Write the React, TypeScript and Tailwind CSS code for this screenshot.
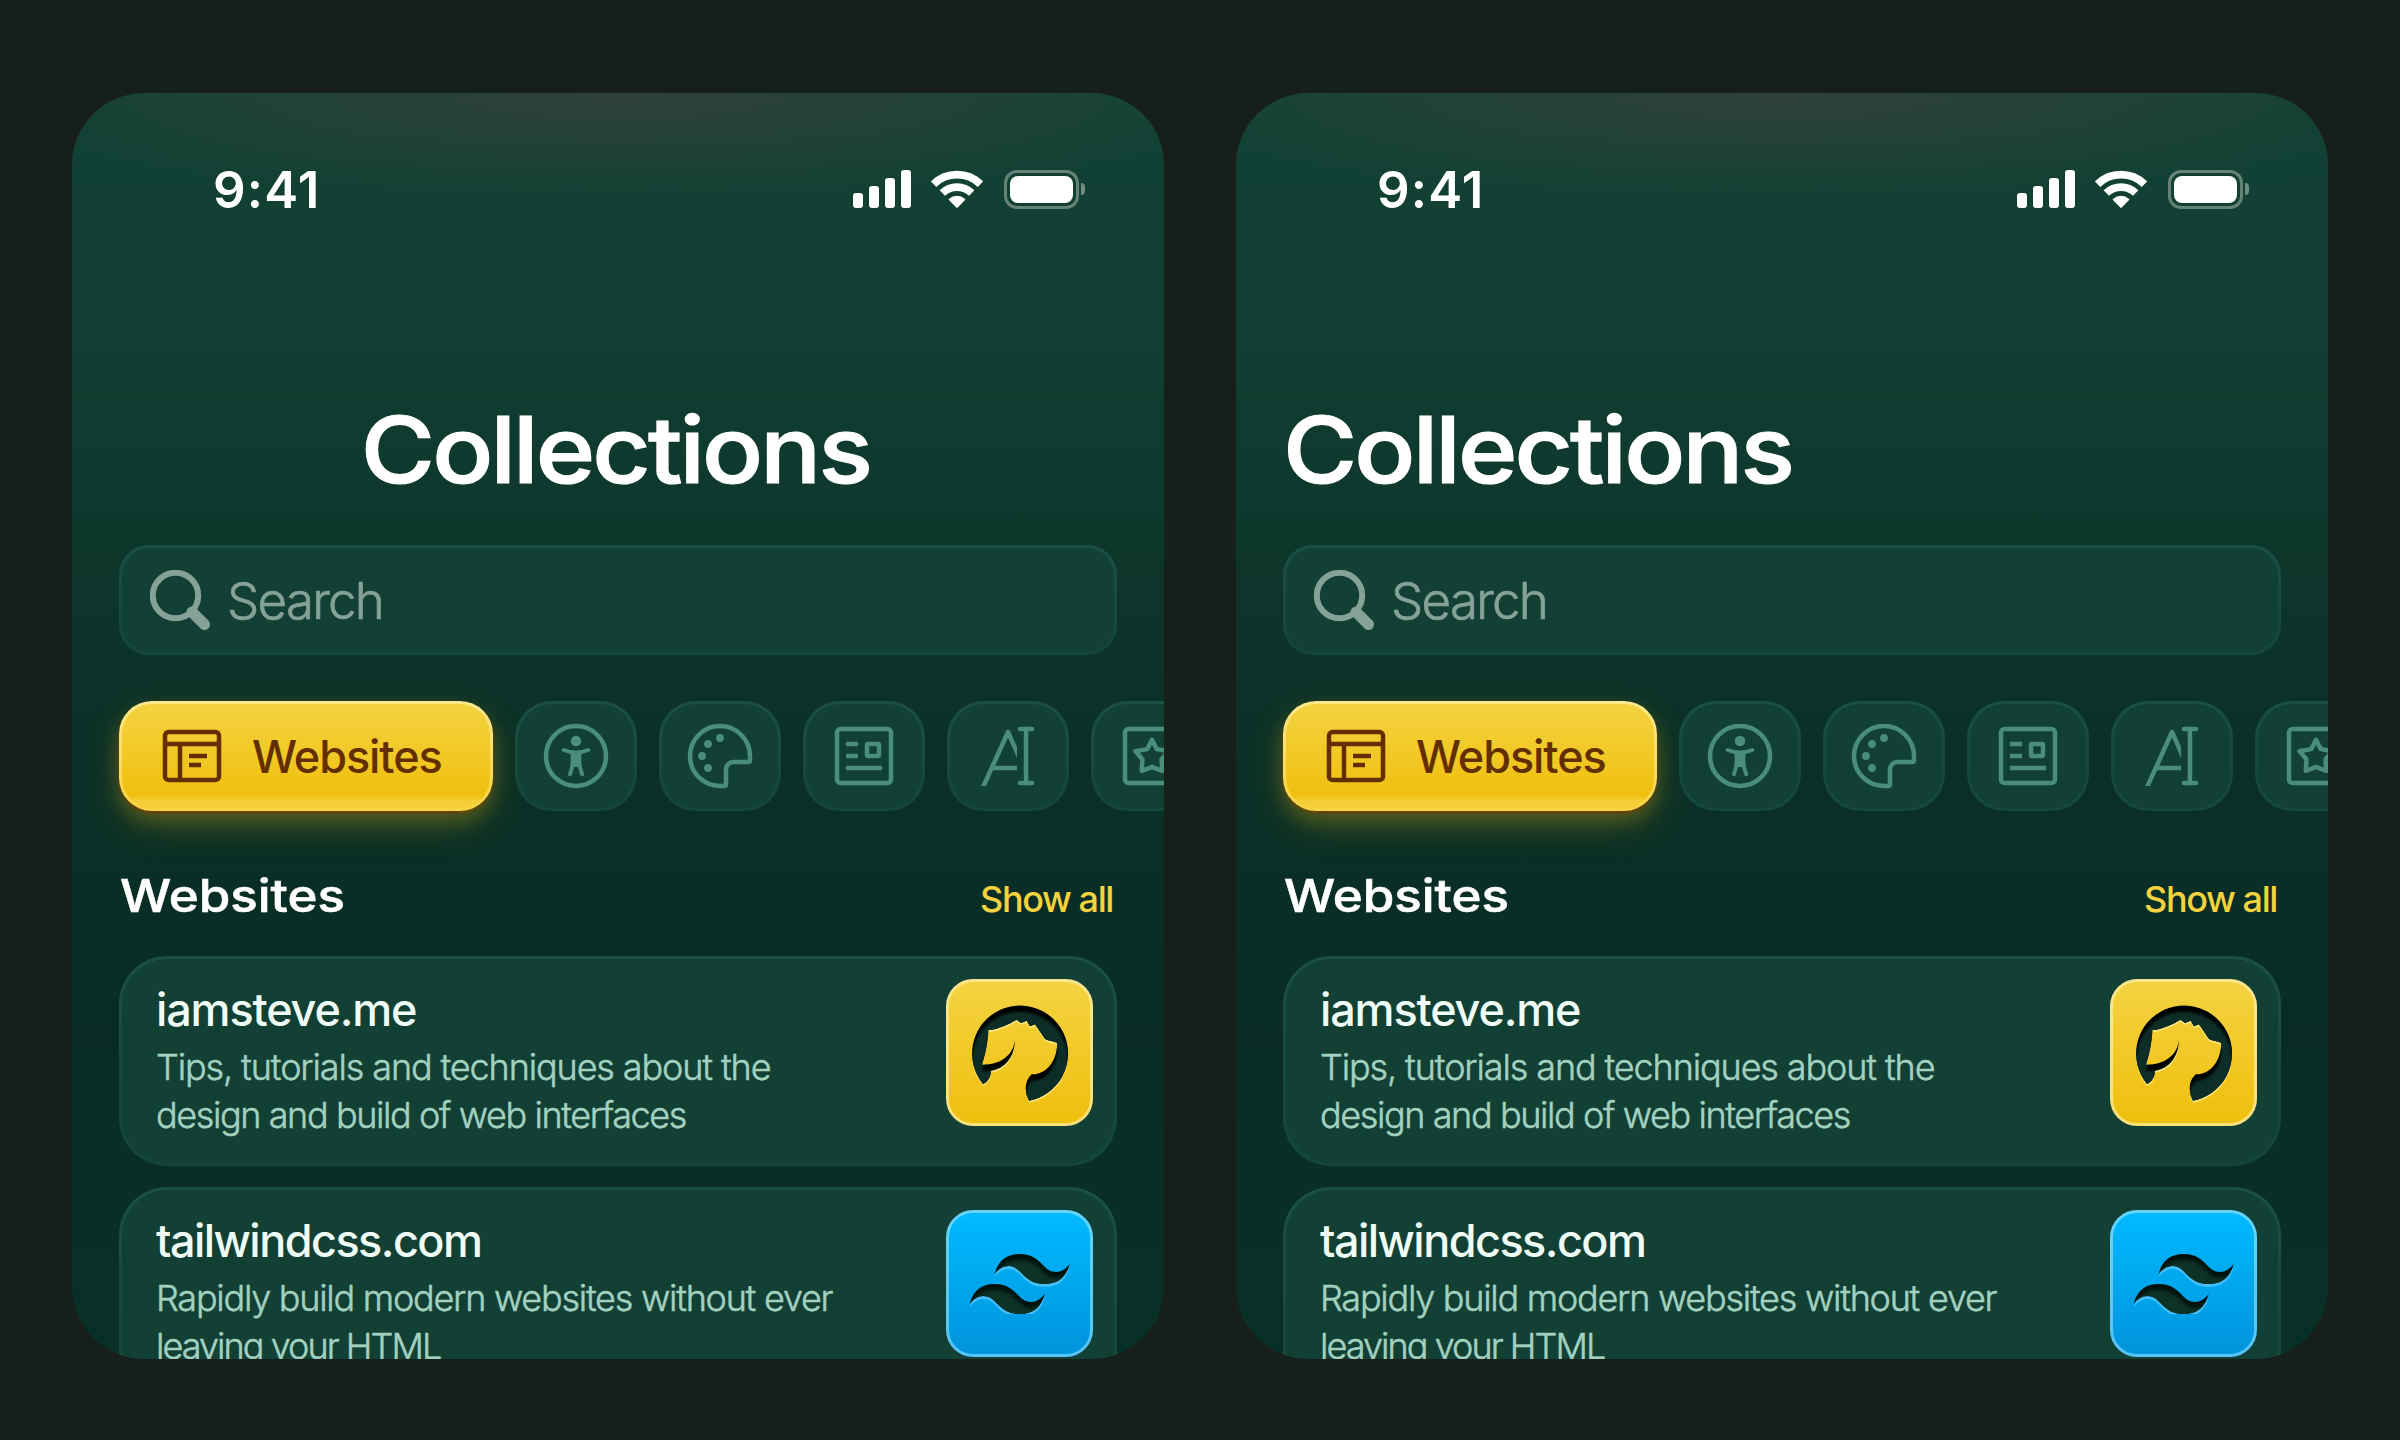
import type { ReactNode } from 'react';

function Signal() {
  return (
    <div className="flex h-[38px] items-end gap-[6px]">
      <div className="h-[15px] w-[10px] rounded-[3px] bg-white" />
      <div className="h-[22px] w-[10px] rounded-[3px] bg-white" />
      <div className="h-[30px] w-[10px] rounded-[3px] bg-white" />
      <div className="h-[38px] w-[10px] rounded-[3px] bg-white" />
    </div>
  );
}

function Wifi() {
  return (
    <svg className="ml-5 h-[39px] w-[52px]" viewBox="0 0 156 117" fill="none" stroke="#fff" strokeWidth="23">
      <path d="M7.8 42.4A101 101 0 0 1 148.2 42.4" />
      <path d="M33.9 69.3A63.5 63.5 0 0 1 122.1 69.3" />
      <path d="M78 113L54 88.5A35 35 0 0 1 102 88.5Z" fill="#fff" strokeWidth="3" strokeLinejoin="round" />
    </svg>
  );
}

function Battery() {
  return (
    <div className="ml-[21px] flex items-center gap-[2px]">
      <div className="h-[39px] w-[75px] rounded-[13px] border-[3px] border-white/35 p-[3px]">
        <div className="h-full w-full rounded-[8px] bg-white" />
      </div>
      <div className="h-[12px] w-[4px] rounded-r-full bg-white/40" />
    </div>
  );
}

function Glyph({ children }: { children: ReactNode }) {
  return (
    <svg
      className="size-[72px] shrink-0"
      viewBox="0 0 24 24"
      fill="none"
      stroke="currentColor"
      strokeWidth="1.5"
      strokeLinejoin="round"
    >
      {children}
    </svg>
  );
}

function LayoutGlyph() {
  return (
    <Glyph>
      <rect x="3" y="4" width="18" height="16" rx="1.2" />
      <path d="M3 8H21M8 8V20M11 12H17M11 15H15" />
    </Glyph>
  );
}

function AccessibilityGlyph() {
  return (
    <Glyph>
      <circle cx="12" cy="12" r="10" />
      <circle cx="12" cy="7" r="1.75" fill="currentColor" stroke="none" />
      <path d="M7.9 10c1.3.55 2.7.85 4.1.85s2.8-.3 4.1-.85" strokeWidth="1.3" strokeLinecap="round" />
      <path d="M10.2 10.6h3.6v4.1l.2 1h-4l.2-1z" fill="currentColor" stroke="none" />
      <path d="M10.9 15L10 18.1M13.1 15L14.05 18.1" strokeWidth="1.3" strokeLinecap="round" />
    </Glyph>
  );
}

function PaletteGlyph() {
  return (
    <Glyph>
      <path d="M12 22A10 10 0 1 1 22 12V13.4Q22 14 21.4 14H16.5A2.5 2.5 0 0 0 14 16.5V21.4Q14 22 13.4 22Z" />
      <g fill="currentColor" stroke="none">
        <circle cx="12" cy="6" r="1.3" />
        <circle cx="8" cy="8" r="1.3" />
        <circle cx="6" cy="12" r="1.3" />
        <circle cx="8" cy="16" r="1.3" />
      </g>
    </Glyph>
  );
}

function NewsGlyph() {
  return (
    <Glyph>
      <rect x="3" y="3" width="18" height="18" rx="1.2" />
      <rect x="13" y="8" width="4" height="4" rx="0.4" />
      <path d="M6 8H10M6 12H10M6 16H18" />
    </Glyph>
  );
}

function TypeGlyph() {
  return (
    <Glyph>
      <clipPath id="letter-clip">
        <rect width="15" height="22" />
      </clipPath>
      <g clipPath="url(#letter-clip)">
        <path d="M3.4 23L12 4L16.2 13.5M7 16H16" />
      </g>
      <path d="M16 3H20M16 21H20M18 3V21" strokeLinecap="round" />
    </Glyph>
  );
}

function StarGlyph() {
  return (
    <Glyph>
      <rect x="3" y="3" width="18" height="18" rx="1.2" />
      <path d="M12 6.6L13.6 9.7L17.5 10.4L15.2 13.1L15.4 17L12 15.6L8.6 17L8.8 13.1L6.5 10.4L10.4 9.7Z" />
    </Glyph>
  );
}

const CIRCLE_DOG =
  'M190 402A144 144 0 1 1 328 452Q318 435 318 416C318 398 324 384 336 373C380 374 411 335 413 279C400 273 388 274 376 267L346 223L331 229L321 212L304 219L291 209C264 224 236 238 206 240C205 277 197 314 187 344C240 345 282 318 286 268C286 318 256 358 214 362C213 380 206 394 190 402Z';

const WAVES =
  'M12 4.8c-3.2 0-5.2 1.6-6 4.8 1.2-1.6 2.6-2.2 4.2-1.8.913.228 1.565.89 2.288 1.624C13.666 10.618 15.027 12 18 12c3.2 0 5.2-1.6 6-4.8-1.2 1.6-2.6 2.2-4.2 1.8-.913-.228-1.565-.89-2.288-1.624C16.337 6.182 14.976 4.8 12 4.8zM6 12c-3.2 0-5.2 1.6-6 4.8 1.2-1.6 2.6-2.2 4.2-1.8.913.228 1.565.89 2.288 1.624C7.666 17.818 9.027 19.2 12 19.2c3.2 0 5.2-1.6 6-4.8-1.2 1.6-2.6 2.2-4.2 1.8-.913-.228-1.565-.89-2.288-1.624C10.337 13.382 8.976 12 6 12z';

function DogTile() {
  return (
    <div className="size-[147px] shrink-0 rounded-[27px] border-[3px] border-transparent [background:linear-gradient(#f4d341,#efbf0d)_padding-box,linear-gradient(#fae68e,#fae07a)_border-box]">
      <svg className="-m-[3px] size-[147px]" viewBox="79 87 441 441">
        <defs>
          <clipPath id="dog-clip">
            <path d={CIRCLE_DOG} />
          </clipPath>
          <filter id="dog-blur" x="-20%" y="-20%" width="140%" height="140%">
            <feGaussianBlur stdDeviation="4" />
          </filter>
        </defs>
        <path d={CIRCLE_DOG} fill="#fce681" transform="translate(0 6)" />
        <path d={CIRCLE_DOG} fill="#000" />
        <g clipPath="url(#dog-clip)">
          <path d={CIRCLE_DOG} fill="#0a2f25" transform="translate(0 19)" filter="url(#dog-blur)" />
        </g>
      </svg>
    </div>
  );
}

function WavesTile() {
  return (
    <div className="size-[147px] shrink-0 rounded-[27px] border-[3px] border-transparent [background:linear-gradient(#00baff,#0094dc)_padding-box,linear-gradient(#66d4ff,#55c4f6)_border-box]">
      <svg className="-m-[3px] size-[147px]" viewBox="79 90 441 441">
        <defs>
          <clipPath id="waves-clip">
            <path d={WAVES} />
          </clipPath>
          <clipPath id="waves-box">
            <rect width="24" height="19.2" />
          </clipPath>
          <filter id="waves-blur" x="-20%" y="-20%" width="140%" height="140%">
            <feGaussianBlur stdDeviation="0.5" />
          </filter>
        </defs>
        <g transform="translate(150 162) scale(12.5)">
          <g clipPath="url(#waves-box)">
            <path d={WAVES} fill="#45bff7" transform="translate(0 .7)" />
          </g>
          <path d={WAVES} fill="#02100c" />
          <g clipPath="url(#waves-clip)">
            <path d={WAVES} fill="#0a3026" transform="translate(0 1.4)" filter="url(#waves-blur)" />
          </g>
        </g>
      </svg>
    </div>
  );
}

function Chip({ children }: { children: ReactNode }) {
  return (
    <div className="flex h-[110px] w-[122px] shrink-0 items-center justify-center rounded-[37px] border-[3px] border-transparent text-[#4a8d7a] [background:linear-gradient(#124034,#124034)_padding-box,linear-gradient(#1a5042,#14463a)_border-box]">
      {children}
    </div>
  );
}

function Card({ name, lines, tile }: { name: ReactNode; lines: ReactNode; tile: ReactNode }) {
  return (
    <div className="flex h-[210px] shrink-0 items-start justify-between rounded-[48px] border-[3px] border-transparent pt-[20px] pr-[21px] pl-[34px] [background:linear-gradient(#124034,#124034)_padding-box,linear-gradient(#1a5042,#14463a)_border-box]">
      <div className="flex flex-col pt-[4px] whitespace-nowrap">
        <div className="text-[45px] leading-[54px] font-medium text-[#effbf5]">{name}</div>
        <div className="mt-[6px] flex flex-col text-[36px] leading-[48px] font-light text-[#a3d1c0] [-webkit-text-stroke:0.5px_#a3d1c0]">
          {lines}
        </div>
      </div>
      {tile}
    </div>
  );
}

function Phone({ centered = false }: { centered?: boolean }) {
  return (
    <div className="flex h-[1266px] w-[1092px] shrink-0 flex-col overflow-hidden rounded-[72px] bg-[radial-gradient(ellipse_640px_106px_at_50%_0,#2f413a_0%,#2f413ab8_32%,#2f413a00_100%),linear-gradient(#124235_0%,#113e32_20%,#0e372c_35%,#0a2f26_55%,#092d24_75%,#093026_100%)] px-[47px]">
      <div className="flex h-[192px] shrink-0 items-center justify-between pr-[32px] pl-[94px]">
        <div className="text-[51px] leading-none font-semibold tracking-[1.2px] text-white">9:41</div>
        <div className="flex items-center">
          <Signal />
          <Wifi />
          <Battery />
        </div>
      </div>

      <div
        className={
          centered
            ? 'mt-[93px] flex h-[143px] shrink-0 items-center justify-center pr-[5px]'
            : 'mt-[93px] flex h-[143px] shrink-0 items-center'
        }
      >
        <h1
          className={
            centered
              ? 'origin-center scale-x-[1.1] text-[92px] leading-none font-medium tracking-[-2.6px] text-white [-webkit-text-stroke:1.2px_#fff]'
              : 'origin-left scale-x-[1.1] text-[92px] leading-none font-medium tracking-[-2.6px] text-white [-webkit-text-stroke:1.2px_#fff]'
          }
        >
          Collections
        </h1>
      </div>

      <div className="mt-[24px] flex h-[110px] shrink-0 items-center rounded-[30px] border-[3px] border-transparent pl-[28px] [background:linear-gradient(#124034,#124034)_padding-box,linear-gradient(#1a5042,#14463a)_border-box]">
        <svg className="size-[60px]" viewBox="0 0 60 60" fill="none" stroke="#86a198">
          <circle cx="25.5" cy="25.5" r="22.7" strokeWidth="6" />
          <path d="M42 42L54.5 54.5" strokeWidth="11" strokeLinecap="round" />
          <path d="M38.5 44L44 38.5" strokeWidth="3" />
        </svg>
        <span className="ml-[17px] text-[51px] leading-none font-light tracking-[-1.7px] text-[#86a198] [-webkit-text-stroke:0.7px_#86a198]">
          Search
        </span>
      </div>

      <div className="mt-[46px] flex h-[110px] shrink-0 gap-[22px]">
        <div className="flex h-[110px] w-[374px] shrink-0 items-center gap-[24px] rounded-[33px] border-[3px] border-transparent pl-[34px] text-[#632f00] shadow-[0_2px_3px_#6b3f00,0_9px_18px_#efbf0d33,0_15px_36px_#efbf0d33] [background:linear-gradient(#efbf0d00_87%,#f4cf38_94%,#f4cf38_100%)_padding-box,linear-gradient(#f4d341,#efbf0d_90%)_padding-box,linear-gradient(#fbe88f,#f8d343)_border-box]">
          <LayoutGlyph />
          <span className="text-[45px] leading-none font-medium tracking-[-1.07px]">Websites</span>
        </div>
        <Chip><AccessibilityGlyph /></Chip>
        <Chip><PaletteGlyph /></Chip>
        <Chip><NewsGlyph /></Chip>
        <Chip><TypeGlyph /></Chip>
        <Chip><StarGlyph /></Chip>
      </div>

      <div className="mt-[60px] flex h-[48px] shrink-0 items-center justify-between pr-[4px] pl-[1px]">
        <h2 className="origin-left scale-x-[1.135] text-[45px] leading-none font-medium text-white [-webkit-text-stroke:0.6px_#fff]">
          Websites
        </h2>
        <a className="pt-[7px] text-[36px] leading-none font-medium tracking-[-1.4px] text-[#f5d33f]">Show all</a>
      </div>

      <div className="mt-[37px] flex flex-col gap-[21px]">
        <Card
          name={<span className="tracking-[-1.16px]">iamsteve.me</span>}
          lines={
            <>
              <span className="tracking-[-1.12px]">Tips, tutorials and techniques about the</span>
              <span className="tracking-[-1.4px]">design and build of web interfaces</span>
            </>
          }
          tile={<DogTile />}
        />
        <Card
          name={<span className="tracking-[-1.54px]">tailwindcss.com</span>}
          lines={
            <>
              <span className="tracking-[-1.25px]">Rapidly build modern websites without ever</span>
              <span className="tracking-[-1.95px]">leaving your HTML</span>
            </>
          }
          tile={<WavesTile />}
        />
      </div>
    </div>
  );
}

export default function App() {
  return (
    <div className="flex h-[1440px] w-[2400px] gap-[72px] overflow-hidden bg-[#171f1c] px-[72px] pt-[93px] font-['Inter',sans-serif]">
      <Phone centered />
      <Phone />
    </div>
  );
}
